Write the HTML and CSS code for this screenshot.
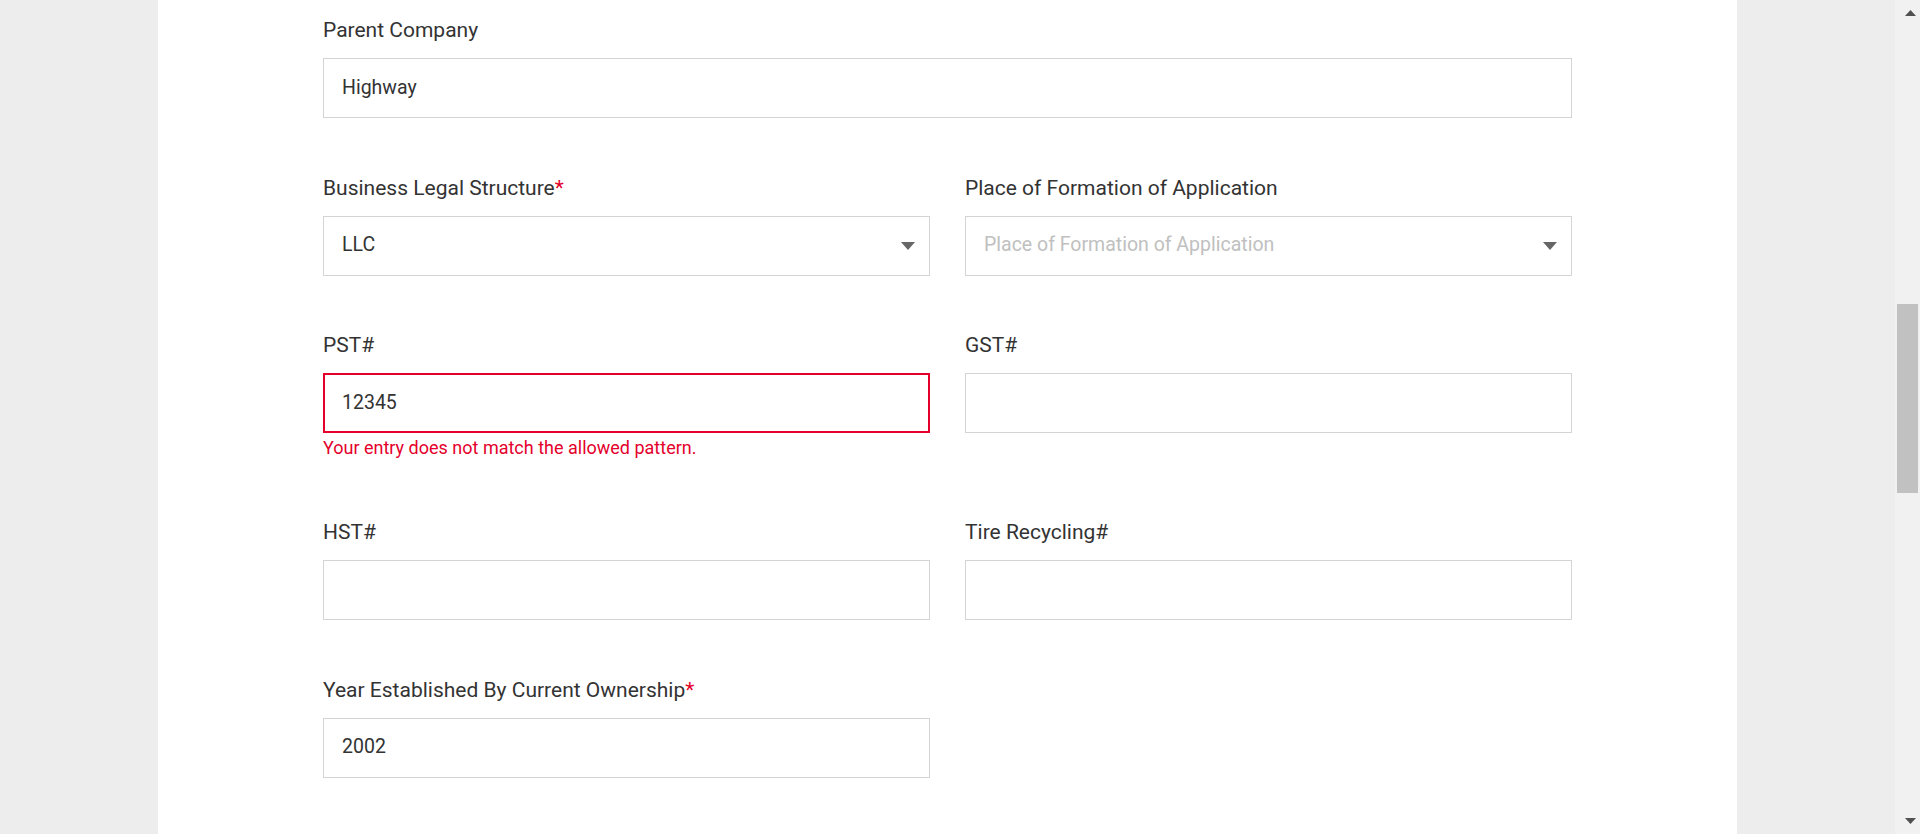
FILE: index.html
```html
<!DOCTYPE html>
<html lang="en">
<head>
<meta charset="utf-8">
<title>Company Information</title>
<link rel="stylesheet" href="styles.css">
</head>
<body>
<div class="page">
  <main class="panel">
    <form class="form">
      <div class="field field-wide">
        <label class="label">Parent Company</label>
        <input class="input" type="text" value="Highway">
      </div>

      <div class="field">
        <label class="label">Business Legal Structure<span class="req">*</span></label>
        <div class="select">
          <span class="select-value">LLC</span>
          <svg class="caret" width="14" height="8" viewBox="0 0 14 8"><path d="M0 0H14L7 8Z" fill="#666"/></svg>
        </div>
      </div>
      <div class="field">
        <label class="label">Place of Formation of Application</label>
        <div class="select">
          <span class="select-value placeholder">Place of Formation of Application</span>
          <svg class="caret" width="14" height="8" viewBox="0 0 14 8"><path d="M0 0H14L7 8Z" fill="#666"/></svg>
        </div>
      </div>

      <div class="field">
        <label class="label">PST#</label>
        <input class="input input-error" type="text" value="12345">
        <div class="error">Your entry does not match the allowed pattern.</div>
      </div>
      <div class="field">
        <label class="label">GST#</label>
        <input class="input" type="text" value="">
      </div>

      <div class="field">
        <label class="label">HST#</label>
        <input class="input" type="text" value="">
      </div>
      <div class="field">
        <label class="label">Tire Recycling#</label>
        <input class="input" type="text" value="">
      </div>

      <div class="field">
        <label class="label">Year Established By Current Ownership<span class="req">*</span></label>
        <input class="input" type="text" value="2002">
      </div>
    </form>
  </main>
</div>
<div class="scrollbar">
  <svg class="sb-arrow sb-up" width="11" height="6" viewBox="0 0 11 6"><path d="M5.5 0L11 6H0Z" fill="#505050"/></svg>
  <div class="sb-track"><div class="sb-thumb"></div></div>
  <svg class="sb-arrow sb-down" width="11" height="6" viewBox="0 0 11 6"><path d="M0 0H11L5.5 6Z" fill="#505050"/></svg>
</div>
</body>
</html>
```

FILE: styles.css
```css
* {
  box-sizing: border-box;
}

html, body {
  margin: 0;
  height: 834px;
  overflow: hidden;
}

body {
  display: flex;
  font-family: "Roboto", "Liberation Sans", sans-serif;
  color: #333333;
  background: #ededed;
}

.page {
  flex: 1;
  display: flex;
  justify-content: center;
  background: #ededed;
}

.panel {
  width: 1579px;
  height: 834px;
  background: #ffffff;
  padding: 18px 165px 0 165px;
}

.form {
  display: grid;
  grid-template-columns: 606.5px 606.5px;
  column-gap: 35.5px;
  row-gap: 57.5px;
}

.field {
  display: flex;
  flex-direction: column;
}

.field-wide {
  grid-column: 1 / span 2;
}

.label {
  font-size: 21px;
  line-height: 24px;
  color: #333333;
  margin-bottom: 16px;
}

.req {
  color: #e4002b;
}

.input,
.select {
  width: 100%;
  height: 60px;
  border: 1px solid #d4d4d4;
  border-radius: 0;
  padding: 0 18px 2px;
  font-family: "Roboto", "Liberation Sans", sans-serif;
  font-size: 19.5px;
  color: #333333;
  background: #ffffff;
  outline: none;
}

.input-error {
  border: 2px solid #e4002b;
  padding: 0 17px 2px;
}

.select {
  display: flex;
  align-items: center;
  justify-content: space-between;
  padding-right: 14px;
}

.select-value.placeholder {
  color: #c0c0c0;
}

.caret {
  display: block;
  margin-top: 2px;
}

.error {
  font-size: 18px;
  line-height: 20px;
  color: #e4002b;
  margin-top: 5px;
  margin-bottom: 4.5px;
}

.scrollbar {
  width: 25px;
  height: 834px;
  background: #f1f1f1;
  display: flex;
  flex-direction: column;
  align-items: center;
}

.sb-arrow {
  display: block;
  flex: none;
  margin-left: 5px;
}

.sb-up {
  margin-top: 10px;
}

.sb-down {
  margin-bottom: 10px;
}

.sb-track {
  flex: 1;
  width: 100%;
  padding-left: 2px;
  padding-right: 2px;
}

.sb-thumb {
  margin-top: 288px;
  height: 189px;
  background: #c1c1c1;
}
```
